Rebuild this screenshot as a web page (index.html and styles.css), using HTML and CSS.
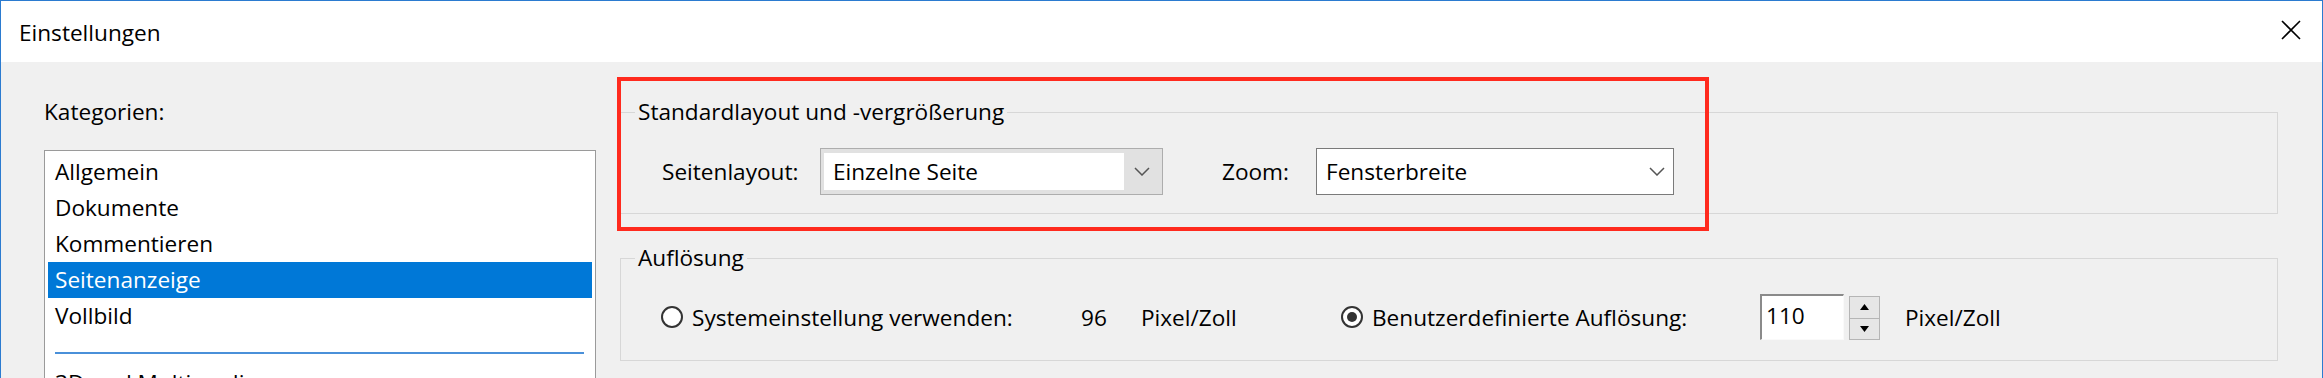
FILE: index.html
```html
<!DOCTYPE html>
<html lang="de">
  <head>
    <meta charset="UTF-8" />
    <meta name="viewport" content="width=device-width, initial-scale=1.0" />
    <link rel="stylesheet" href="styles.css">
    <title>Einstellungen</title>
  </head>
  <body>
    <div class="window">
      <div class="titlebar">
        <span class="title">Einstellungen</span>
        <svg class="close" width="20" height="20" viewBox="0 0 20 20">
          <path d="M1 1 L19 19 M19 1 L1 19" stroke="#000" stroke-width="1.6" fill="none" />
        </svg>
      </div>

      <div class="content">
        <div class="sidebar">
          <div class="label">Kategorien:</div>
          <ul class="list">
            <li>Allgemein</li>
            <li>Dokumente</li>
            <li>Kommentieren</li>
            <li class="selected">Seitenanzeige</li>
            <li>Vollbild</li>
            <li class="sep"></li>
            <li>3D und Multimedia</li>
            <li>Barrierefreiheit</li>
          </ul>
        </div>

        <div class="panel">
          <!-- red annotation box -->
          <div class="marker"></div>

          <fieldset class="group">
            <legend>Standardlayout und -vergrößerung</legend>
            <div class="row">
              <span class="cell-layout">Seitenlayout:</span>
              <div class="combo combo-readonly">
                <span class="field">Einzelne Seite</span>
                <span class="drop">
                  <svg width="16" height="9" viewBox="0 0 16 9"><path d="M1 1 L8 8 L15 1" stroke="#555" stroke-width="1.5" fill="none" /></svg>
                </span>
              </div>
              <span class="cell-zoom">Zoom:</span>
              <div class="combo combo-white">
                <span class="field">Fensterbreite</span>
                <span class="drop">
                  <svg width="16" height="9" viewBox="0 0 16 9"><path d="M1 1 L8 8 L15 1" stroke="#555" stroke-width="1.5" fill="none" /></svg>
                </span>
              </div>
            </div>
          </fieldset>

          <fieldset class="group group-res">
            <legend>Auflösung</legend>
            <div class="row">
              <span class="radio"></span>
              <span class="cell-system">Systemeinstellung verwenden:</span>
              <span class="cell-value">96</span>
              <span class="cell-unit">Pixel/Zoll</span>
              <span class="radio checked"></span>
              <span class="cell-custom">Benutzerdefinierte Auflösung:</span>
              <span class="spin-edit">110</span>
              <span class="spin-buttons">
                <span class="spin-btn"><svg width="9" height="6" viewBox="0 0 9 6"><path d="M4.5 0 L9 6 L0 6 Z" fill="#000" /></svg></span>
                <span class="spin-btn"><svg width="9" height="6" viewBox="0 0 9 6"><path d="M0 0 L9 0 L4.5 6 Z" fill="#000" /></svg></span>
              </span>
              <span class="cell-unit2">Pixel/Zoll</span>
            </div>
          </fieldset>
        </div>
      </div>
    </div>
  </body>
</html>
```

FILE: styles.css
```css
html,
body {
  margin: 0;
  padding: 0;
}

body {
  font-family: "Open Sans", "Noto Sans", sans-serif;
  font-size: 22.6px;
  color: #000;
  background-color: #f0f0f0;
}

.window {
  height: 378px;
  box-sizing: border-box;
  border: 1px solid #2b7bd0;
  border-bottom: none;
  background-color: #f0f0f0;
  overflow: hidden;
}

.titlebar {
  height: 61px;
  display: flex;
  align-items: flex-start;
  justify-content: space-between;
  padding: 0 21px 0 18px;
  background-color: #fff;
}

.title {
  margin-top: 17px;
  line-height: 30px;
}

.close {
  margin-top: 19px;
}

.content {
  display: flex;
  gap: 24px;
  padding: 35px 44px 0 43px;
}

/* left column */
.sidebar {
  width: 552px;
  flex-shrink: 0;
}

.label {
  line-height: 30px;
}

.list {
  list-style: none;
  margin: 23px 0 0 0;
  padding: 3px;
  height: 260px;
  background-color: #fff;
  border: 1px solid #9a9a9a;
}

.list li {
  height: 36px;
  line-height: 36px;
  padding-left: 7px;
}

.list li.selected {
  background-color: #0078d7;
  color: #fff;
}

.list li.sep {
  height: 2px;
  padding: 0;
  margin: 18px 8px 11px 7px;
  background-color: #4a90d9;
}

/* right column */
.panel {
  flex: 1;
  position: relative;
}

.marker {
  position: absolute;
  left: -3px;
  top: -20px;
  width: 1092px;
  height: 154px;
  box-sizing: border-box;
  border: 4px solid #ff2a1e;
  z-index: 2;
}

.group {
  margin: 0;
  padding: 21px 14px 18px 14px;
  border: 1px solid #d7d7d7;
}

.group legend {
  padding: 0 3px;
  line-height: 30px;
}

.group-res {
  margin-top: 29px;
  padding-bottom: 20px;
}

.row {
  display: flex;
  align-items: center;
  padding-left: 27px;
}

.cell-layout {
  width: 158px;
}

.combo {
  display: flex;
  align-items: stretch;
  height: 47px;
  box-sizing: border-box;
}

.combo-readonly {
  width: 343px;
  padding: 4px 2px 4px 3px;
  border: 1px solid #adadad;
  background-color: #e1e1e1;
}

.combo-readonly .field {
  flex: 1;
  background-color: #fff;
  padding-left: 9px;
  display: flex;
  align-items: center;
}

.combo-readonly .drop {
  width: 36px;
}

.combo-white {
  width: 358px;
  border: 1px solid #7a7a7a;
  background-color: #fff;
}

.combo-white .field {
  flex: 1;
  padding-left: 9px;
  display: flex;
  align-items: center;
}

.combo-white .drop {
  width: 32px;
}

.drop {
  display: flex;
  align-items: center;
  justify-content: center;
}

.cell-zoom {
  margin-left: 59px;
  width: 94px;
}

.radio {
  width: 22px;
  height: 22px;
  box-sizing: border-box;
  border: 2px solid #333;
  border-radius: 50%;
  background-color: #fff;
  margin-left: -1px;
  margin-right: 9px;
  position: relative;
  flex-shrink: 0;
}

.radio.checked::after {
  content: "";
  position: absolute;
  left: 4px;
  top: 4px;
  width: 10px;
  height: 10px;
  border-radius: 50%;
  background-color: #333;
}

.cell-system {
  width: 389px;
}

.cell-value {
  width: 60px;
}

.cell-unit {
  width: 201px;
}

.cell-custom {
  width: 388px;
}

.spin-edit {
  width: 84px;
  height: 46px;
  box-sizing: border-box;
  padding-left: 4px;
  line-height: 40px;
  background-color: #fff;
  border-top: 2px solid #8a8a8a;
  border-left: 2px solid #8a8a8a;
  border-right: 1px solid #fafafa;
  border-bottom: 1px solid #fafafa;
}

.spin-buttons {
  display: flex;
  flex-direction: column;
  margin-left: 5px;
  width: 31px;
  height: 44px;
  align-self: flex-end;
}

.spin-btn {
  flex: 1;
  display: flex;
  align-items: center;
  justify-content: center;
  background-color: #e6e6e6;
  border: 1px solid #b5b5b5;
}

.spin-btn + .spin-btn {
  border-top: none;
}

.cell-unit2 {
  margin-left: 25px;
}
```
